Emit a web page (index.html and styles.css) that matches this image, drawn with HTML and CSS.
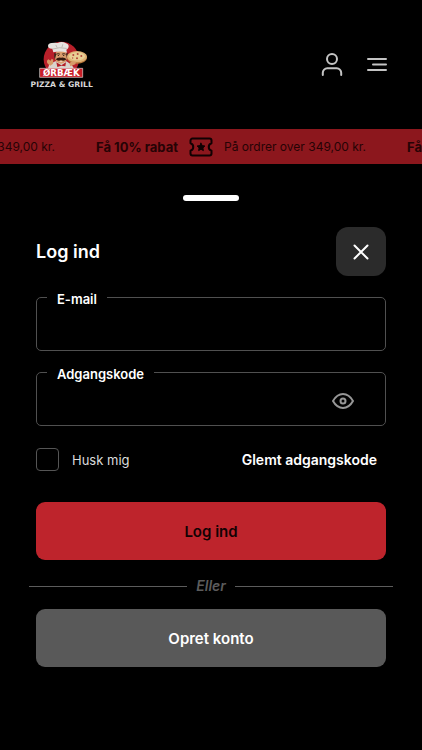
FILE: index.html
```
<!DOCTYPE html>
<html lang="da">
<head>
<meta charset="UTF-8">
<meta name="viewport" content="width=device-width, initial-scale=1.0">
<title>Log ind - Ørbæk Pizza &amp; Grill</title>
<link rel="stylesheet" href="styles.css">
</head>
<body>
<header class="header">
    <a class="logo" href="#" aria-label="Ørbæk Pizza &amp; Grill">
        <svg viewBox="24 12 204 156" width="68" height="52">
            <circle cx="124" cy="73" r="53" fill="#b8202a"/>
            <!-- chef body -->
            <path d="M82 106l6-18 18-9h33l16 10 10 17z" fill="#d9d4cd"/>
            <path d="M84 87q-7-8 1-14l7 4 3-6 5 3-1 12-8 6z" fill="#d79a68"/>
            <path d="M109 82l15 9 14-9-2 12-12-2-12 4z" fill="#b51f27"/>
            <!-- face -->
            <ellipse cx="123" cy="65" rx="19" ry="21" fill="#d99c6c"/>
            <path d="M103 53q-2 14 2 20l4-17zM143 53q2 12-2 20l-3-17z" fill="#3c2118"/>
            <path d="M110 57q5-3 9 0M127 57q5-3 9 0" fill="none" stroke="#2a1710" stroke-width="2.5"/>
            <circle cx="115" cy="61" r="2" fill="#1c1210"/>
            <circle cx="131" cy="61" r="2" fill="#1c1210"/>
            <path d="M123 68q-9-3-16 5 8 7 16 2 8 5 17-2-8-8-17-5z" fill="#34190f"/>
            <path d="M117 79q6 5 12 0z" fill="#f3e3dc"/>
            <!-- hat -->
            <path d="M100 52l-3-11q-12 1-13-8 0-8 11-9 11-2 18 0 13-6 25 1 11 4 7 13-2 5-6 6l2 9q-20-6-41-1z" fill="#e6e3df"/>
            <path d="M98 42q20-7 41-2M108 31l3 6M128 29l-2 7" fill="none" stroke="#aaa39b" stroke-width="2"/>
            <!-- pizza -->
            <ellipse cx="171" cy="68" rx="30" ry="18" fill="#b9783c"/>
            <ellipse cx="171" cy="65" rx="30" ry="17" fill="#dfb276"/>
            <ellipse cx="171" cy="64" rx="24" ry="12" fill="#e8cf94"/>
            <g fill="#b4473a">
                <circle cx="160" cy="60" r="3"/>
                <circle cx="173" cy="57" r="3"/>
                <circle cx="184" cy="63" r="3"/>
                <circle cx="171" cy="70" r="3"/>
                <circle cx="158" cy="69" r="2"/>
            </g>
            <path d="M148 85q8-9 20-5l-2 8-15 6z" fill="#d79a68"/>
            <!-- name plate -->
            <path d="M60 100h128v27H60z" fill="#c81e28" stroke="#e8d9d7" stroke-width="2"/>
            <text class="logo-name" x="124" y="123" text-anchor="middle">ØRBÆK</text>
            <text class="logo-sub" x="125" y="156" text-anchor="middle">PIZZA &amp; GRILL</text>
        </svg>
    </a>
    <nav class="header-actions">
        <button class="icon-btn" type="button" aria-label="Profil">
            <svg viewBox="0 0 24 24" width="24" height="24">
                <circle cx="12" cy="6" r="5"/>
                <path d="M2.8 22v-2.2a4.5 4.5 0 0 1 4.5-4.5h9.4a4.5 4.5 0 0 1 4.5 4.5V22"/>
            </svg>
        </button>
        <button class="icon-btn" type="button" aria-label="Menu">
            <svg viewBox="0 0 24 24" width="24" height="24">
                <path d="M3 6h18M8 11.500h13M3 17h18"/>
            </svg>
        </button>
    </nav>
</header>

<div class="ticker">
    <div class="ticker-item">
        <strong>Få 10% rabat</strong>
        <svg class="ticket" viewBox="0 0 24 20" width="24" height="20">
            <path d="M3.5 1.5h17a2 2 0 0 1 2 2v2.7a4 4 0 0 0 0 7.6v2.7a2 2 0 0 1-2 2h-17a2 2 0 0 1-2-2v-2.7a4 4 0 0 0 0-7.6V3.5a2 2 0 0 1 2-2z"/>
            <path class="star" d="M12 6.2l1.2 2.4 2.7.4-2 1.9.5 2.7-2.4-1.3-2.4 1.3.5-2.7-2-1.9 2.7-.4z"/>
        </svg>
        <span>På ordrer over 349,00 kr.</span>
    </div>
    <div class="ticker-item">
        <strong>Få 10% rabat</strong>
        <svg class="ticket" viewBox="0 0 24 20" width="24" height="20">
            <path d="M3.5 1.5h17a2 2 0 0 1 2 2v2.7a4 4 0 0 0 0 7.6v2.7a2 2 0 0 1-2 2h-17a2 2 0 0 1-2-2v-2.7a4 4 0 0 0 0-7.6V3.5a2 2 0 0 1 2-2z"/>
            <path class="star" d="M12 6.2l1.2 2.4 2.7.4-2 1.9.5 2.7-2.4-1.3-2.4 1.3.5-2.7-2-1.9 2.7-.4z"/>
        </svg>
        <span>På ordrer over 349,00 kr.</span>
    </div>
    <div class="ticker-item">
        <strong>Få 10% rabat</strong>
        <svg class="ticket" viewBox="0 0 24 20" width="24" height="20">
            <path d="M3.5 1.5h17a2 2 0 0 1 2 2v2.7a4 4 0 0 0 0 7.6v2.7a2 2 0 0 1-2 2h-17a2 2 0 0 1-2-2v-2.7a4 4 0 0 0 0-7.6V3.5a2 2 0 0 1 2-2z"/>
            <path class="star" d="M12 6.2l1.2 2.4 2.7.4-2 1.9.5 2.7-2.4-1.3-2.4 1.3.5-2.7-2-1.9 2.7-.4z"/>
        </svg>
        <span>På ordrer over 349,00 kr.</span>
    </div>
</div>

<main class="sheet">
    <div class="handle"></div>
    <div class="sheet-header">
        <h1>Log ind</h1>
        <button class="close-btn" type="button" aria-label="Luk">
            <svg viewBox="0 0 16 16" width="16" height="16">
                <path d="M1.5 1.5l13 13M14.5 1.5l-13 13"/>
            </svg>
        </button>
    </div>
    <form class="login-form">
        <fieldset class="field">
            <legend><label for="email">E-mail</label></legend>
            <input type="email" id="email" autocomplete="email">
        </fieldset>
        <fieldset class="field">
            <legend><label for="password">Adgangskode</label></legend>
            <input type="password" id="password" autocomplete="current-password">
            <button class="eye-btn" id="toggleBtn" type="button" aria-label="Vis adgangskode">
                <svg viewBox="0 0 24 18" width="24" height="18">
                    <path d="M2 9c2-3.5 5.5-7 10-7s8 3.5 10 7c-2 3.5-5.5 7-10 7S4 12.5 2 9z"/>
                    <circle cx="12" cy="9" r="2.5"/>
                </svg>
            </button>
        </fieldset>
        <div class="options">
            <label class="remember">
                <input type="checkbox" id="remember">
                <span>Husk mig</span>
            </label>
            <a class="forgot" href="#">Glemt adgangskode</a>
        </div>
        <button class="btn login-btn" type="submit">Log ind</button>
        <div class="divider"><span>Eller</span></div>
        <button class="btn create-btn" type="button">Opret konto</button>
    </form>
</main>
<script>
const password = document.getElementById('password');
document.getElementById('toggleBtn').addEventListener('click', () => {
    password.type = password.type === 'password' ? 'text' : 'password';
});
</script>
</body>
</html>
```
FILE: styles.css
```
* {
    margin: 0;
    padding: 0;
    box-sizing: border-box;
    font-family: Inter, 'Liberation Sans', sans-serif;
}
body {
    min-height: 100vh;
    background: #000;
    color: #fff;
}
button {
    border: none;
    cursor: pointer;
}
svg {
    display: block;
    fill: none;
    stroke-linecap: round;
    stroke-linejoin: round;
}
.header {
    display: flex;
    justify-content: space-between;
    align-items: center;
    padding: 39px 33px 38px 28px;
}
.logo-name,
.logo-sub {
    font-family: 'DejaVu Sans', sans-serif;
    font-weight: 700;
}
.logo-name {
    font-size: 26px;
    fill: #fff;
}
.logo-sub {
    font-size: 23px;
    fill: #d8d8d8;
}
.header-actions {
    display: flex;
    gap: 21px;
}
.icon-btn {
    background: none;
}
.icon-btn svg {
    stroke: #c4c4c4;
    stroke-width: 2;
}
.ticker {
    display: flex;
    justify-content: center;
    align-items: center;
    gap: 41px;
    height: 35px;
    padding-left: 40px;
    overflow: hidden;
    background: #8c171d;
    color: #260305;
    font-size: 12px;
    white-space: nowrap;
}
.ticker-item {
    display: flex;
    flex-shrink: 0;
    align-items: center;
    gap: 11px;
}
.ticker-item strong {
    font-size: 13px;
    font-weight: 700;
}
.ticket {
    stroke: #100102;
    stroke-width: 2;
}
.ticket .star {
    fill: #100102;
    stroke-width: 1;
}
.sheet {
    padding: 31px 36px 82px;
}
.handle {
    width: 56px;
    height: 6px;
    margin: 0 auto 26px;
    border-radius: 3px;
    background: #fff;
}
.sheet-header {
    display: flex;
    justify-content: space-between;
    align-items: center;
    margin-bottom: 11px;
}
.sheet-header h1 {
    font-size: 18px;
    font-weight: 600;
}
.close-btn {
    display: flex;
    justify-content: center;
    align-items: center;
    width: 50px;
    height: 49px;
    border-radius: 12px;
    background: #2b2b2b;
}
.close-btn svg {
    stroke: #fff;
    stroke-width: 2;
}
.field {
    display: flex;
    align-items: center;
    min-width: 0;
    height: 64px;
    margin-bottom: 11px;
    padding: 0 30px 6px 18px;
    border: 1px solid #505050;
    border-radius: 5px;
}
.field legend {
    margin-left: -8px;
    padding: 4px 10px 0;
    font-size: 13px;
    font-weight: 600;
    line-height: 16px;
}
.field input {
    flex: 1;
    min-width: 0;
    height: 32px;
    border: none;
    outline: none;
    background: none;
    color: #fff;
    font-size: 16px;
}
.eye-btn {
    background: none;
}
.eye-btn svg {
    stroke: #969696;
    stroke-width: 2;
}
.options {
    display: flex;
    justify-content: space-between;
    align-items: center;
    margin: 22px 0 31px;
    padding-right: 9px;
    font-size: 14px;
}
.remember {
    display: flex;
    align-items: center;
    gap: 13px;
    color: #dcdcdc;
    font-size: 13px;
}
.remember input {
    appearance: none;
    width: 23px;
    height: 23px;
    border: 1px solid #555;
    border-radius: 4px;
}
.remember input:checked {
    background: #be242c;
}
.forgot {
    color: #fff;
    font-weight: 600;
    text-decoration: none;
}
.btn {
    display: block;
    width: 100%;
    height: 58px;
    border-radius: 9px;
    font-size: 15px;
    font-weight: 600;
}
.login-btn {
    background: #be242c;
    color: #120203;
}
.create-btn {
    background: #595959;
    color: #fff;
}
.divider {
    display: flex;
    align-items: center;
    gap: 9px;
    margin: 17px -7px 14px;
    color: #5c5c5c;
    font-size: 14px;
    font-style: italic;
    font-weight: 600;
    line-height: 18px;
}
.divider::before,
.divider::after {
    content: '';
    flex: 1;
    height: 1px;
    background: #5c5c5c;
}
```
